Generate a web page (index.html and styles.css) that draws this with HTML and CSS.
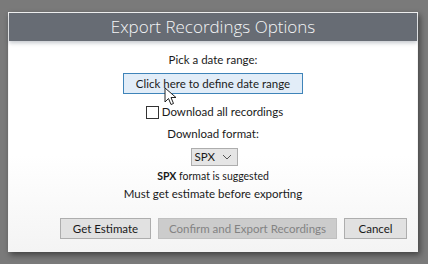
FILE: index.html
```html
<!DOCTYPE html>
<html lang="en">
<head>
    <meta charset="UTF-8">
    <title>Export Recordings Options</title>
    <link rel="stylesheet" href="styles.css">
</head>
<body>
    <div class="dialog">
        <div class="title-bar">Export Recordings Options</div>
        <div class="content">
            <div class="label">Pick a date range:</div>
            <div class="range-wrap">
                <button class="range-btn">Click here to define date range</button>
                <svg class="cursor" width="13" height="20" viewBox="0 0 13 20">
                    <path d="M1 1 L1 15 L4.5 11.5 L7 17.5 L9.5 16.5 L7 10.5 L12 10.5 Z" fill="#fff" stroke="#222" stroke-width="1" stroke-linejoin="round"/>
                </svg>
            </div>
            <label class="check-row">
                <span class="box"></span>
                <span>Download all recordings</span>
            </label>
            <div class="label format-label">Download format:</div>
            <div class="select">
                <span>SPX</span>
                <svg width="10" height="6" viewBox="0 0 10 6"><path d="M1 1 L5 5 L9 1" fill="none" stroke="#555" stroke-width="1"/></svg>
            </div>
            <div class="hint"><b>SPX</b> format is suggested</div>
            <div class="label note">Must get estimate before exporting</div>
        </div>
        <div class="actions">
            <button class="btn estimate">Get Estimate</button>
            <button class="btn confirm" disabled>Confirm and Export Recordings</button>
            <button class="btn cancel">Cancel</button>
        </div>
    </div>
</body>
</html>
```

FILE: styles.css
```css
body {
    margin: 0;
    width: 428px;
    height: 264px;
    overflow: hidden;
    background-color: #7a7a7a;
    font-family: Lato, Arial, sans-serif;
    font-size: 11.5px;
    color: #1a1a1a;
}
.dialog {
    margin: 12px 0 0 8px;
    width: 410px;
    height: 240px;
    box-sizing: border-box;
    border: 1px solid #f4f4f4;
    background: linear-gradient(#ffffff 60%, #f4f4f4);
    box-shadow: 2px 3px 6px rgba(0, 0, 0, 0.45);
    display: flex;
    flex-direction: column;
}
.title-bar {
    height: 28px;
    background-color: #676c74;
    color: #f4f5f6;
    font-family: "Open Sans", sans-serif;
    font-weight: 300;
    font-size: 17px;
    line-height: 27px;
    text-align: center;
    box-shadow: 0 2px 4px rgba(90, 100, 115, 0.35);
}
.content {
    display: flex;
    flex-direction: column;
    align-items: center;
    padding-top: 11px;
}
.label {
    line-height: 16px;
}
.range-wrap {
    position: relative;
    margin-top: 5px;
}
.range-btn {
    width: 180px;
    height: 21px;
    padding: 0;
    border: 1px solid #3f84b9;
    background-color: #e2edf8;
    font-family: inherit;
    font-size: 11.5px;
    color: #1a1a1a;
}
.cursor {
    position: absolute;
    left: 41px;
    top: 14px;
}
.check-row {
    display: flex;
    align-items: center;
    gap: 3px;
    margin-top: 10px;
    margin-left: 3px;
    line-height: 16px;
}
.box {
    width: 11px;
    height: 11px;
    border: 1px solid #333;
    background-color: #fff;
}
.format-label {
    margin-top: 6px;
}
.select {
    display: flex;
    align-items: center;
    justify-content: space-between;
    width: 47px;
    height: 18px;
    box-sizing: border-box;
    margin-top: 6px;
    margin-left: 2px;
    padding: 0 5px 0 3px;
    border: 1px solid #adadad;
    background-color: #e5e5e5;
    line-height: 16px;
}
.hint {
    margin-top: 3px;
    font-size: 10.5px;
    line-height: 15px;
}
.note {
    margin-top: 2px;
}
.actions {
    display: flex;
    margin-top: auto;
    margin-bottom: 12px;
    padding-left: 51px;
    gap: 7px;
}
.btn {
    height: 21px;
    padding: 0;
    border: 1px solid #adadad;
    background-color: #e1e1e1;
    font-family: inherit;
    font-size: 11.5px;
    color: #1a1a1a;
}
.estimate {
    width: 91px;
}
.confirm {
    width: 179px;
    background-color: #cccccc;
    border-color: #bfbfbf;
    color: #838383;
}
.cancel {
    width: 63px;
}
```
